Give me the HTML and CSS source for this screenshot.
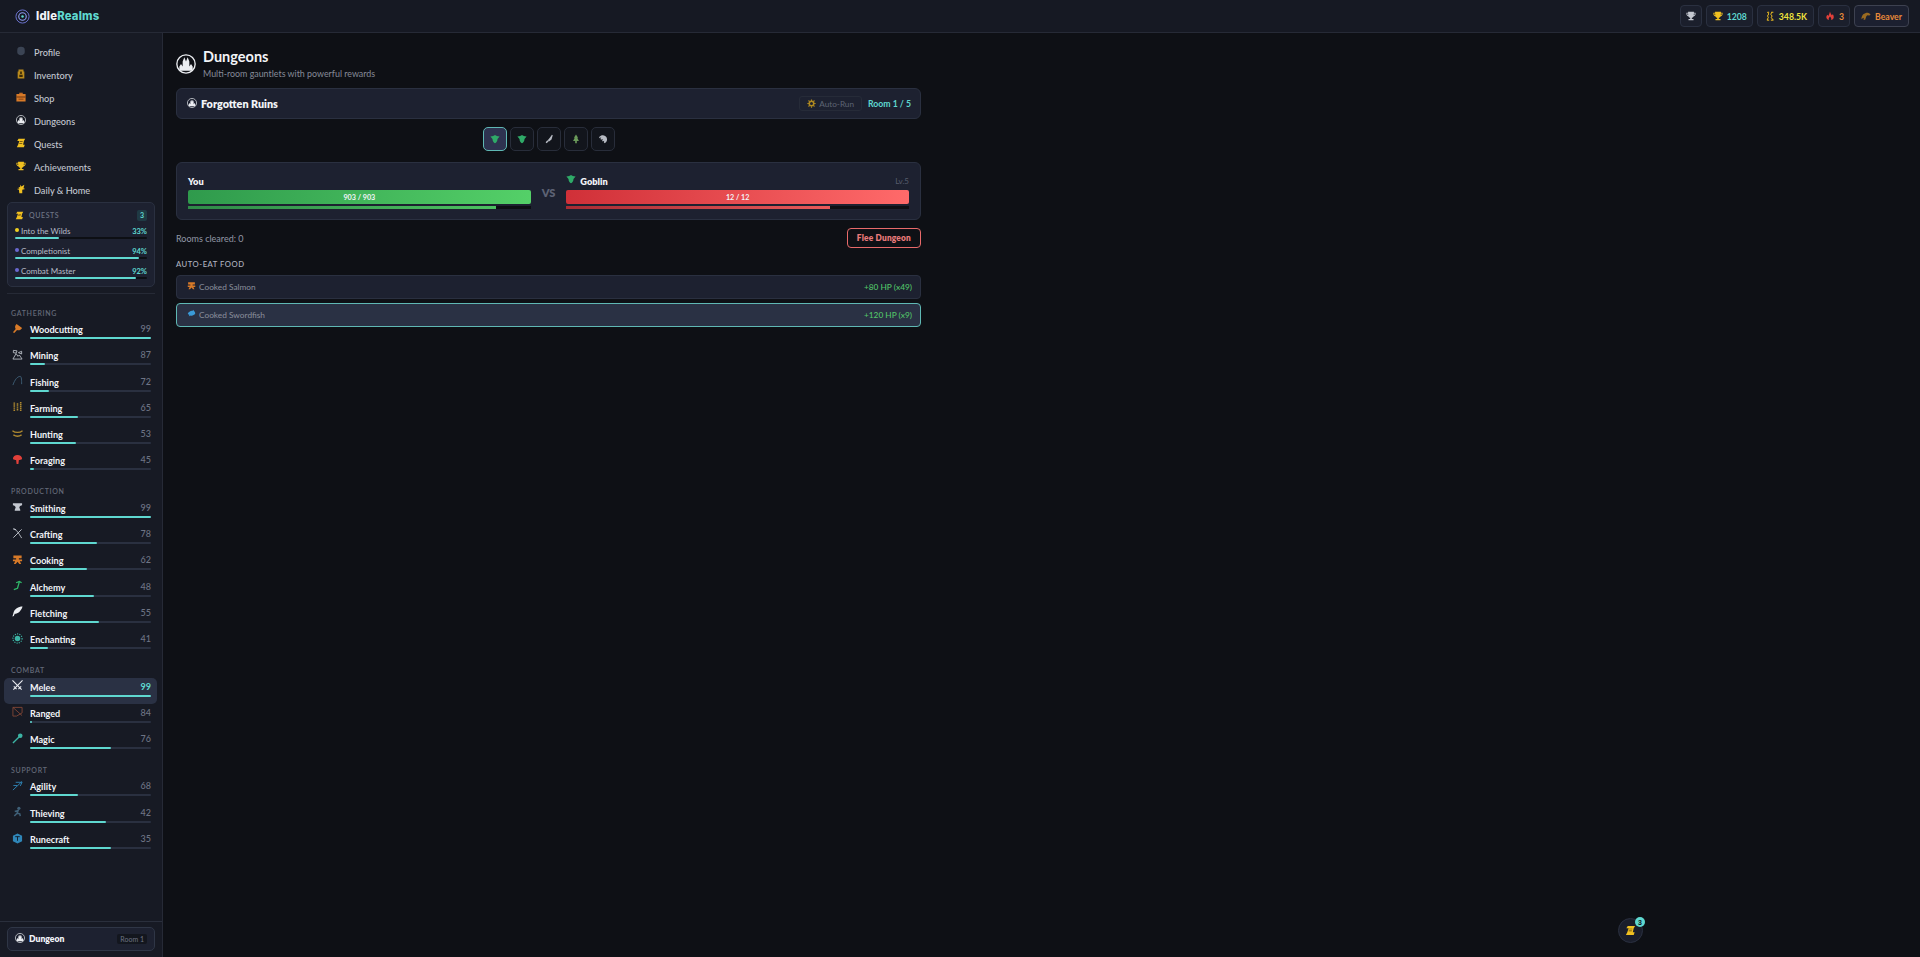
FILE: index.html
```html
<!DOCTYPE html>
<html lang="en">
<head>
<meta charset="utf-8">
<title>IdleRealms - Dungeons</title>
<link rel="stylesheet" href="styles.css">
</head>
<body>
<svg class="defs" width="0" height="0" aria-hidden="true">
  <symbol id="i-castle" viewBox="0 0 24 24"><circle cx="12" cy="12" r="11" fill="none" stroke="currentColor" stroke-width="1.6"/><path fill="currentColor" d="M4 20v-5l2-3 2 3V9l2-5 2 5 2-5 2 5v6l2-3 2 3v5z"/></symbol>
  <symbol id="i-goblin" viewBox="0 0 24 24"><path fill="currentColor" d="M1 6l7-1c1-3 7-3 8 0l7 1-5 6c0 5-3 10-6 10s-6-5-6-10z"/></symbol>
  <symbol id="i-scroll" viewBox="0 0 24 24"><path fill="currentColor" d="M6 2h16l-3 5-2 9h4l-2 6H2l3-6 3-9H3z"/><path fill="#5a3d0c" d="M9 8h7v1.500H9zM8 12h7v1.500H8z"/></symbol>
  <symbol id="i-trophy" viewBox="0 0 24 24"><path fill="currentColor" d="M5 2h14v2h4v3c0 3-2 5-5 6-1 2-3 3-4 3v3h4v3H6v-3h4v-3c-1 0-3-1-4-3-3-1-5-3-5-6V4h4zM3 6v1c0 1 1 3 2.500 3L5 6zm18 0h-2l-.5 4C20 10 21 8 21 7z"/></symbol>
  <symbol id="i-chest" viewBox="0 0 24 24"><path fill="currentColor" d="M6 1h12v5h2v17H4V6h2z"/><path fill="#3a2a08" d="M10 6h4v6h-4zM8 14h8v5H8z"/></symbol>
  <symbol id="i-shop" viewBox="0 0 24 24"><path fill="currentColor" d="M8 2h8v3h7v18H1V5h7z"/><path fill="#6b3410" d="M1 11h22v2H1zM6 16h12v2H6zM10 4h4v1h-4z"/></symbol>
  <symbol id="i-head" viewBox="0 0 24 24"><path fill="currentColor" d="M3 10a9 8 0 0 1 18 0v5c0 4-4 7-9 7s-9-3-9-7z"/></symbol>
  <symbol id="i-gift" viewBox="0 0 24 24"><path fill="currentColor" d="M10 2l3 4 7-4-2 8 4 2-7 2v8H8l-1-8-5-2 6-1-2-4 4 1z"/></symbol>
  <symbol id="i-axe" viewBox="0 0 24 24"><path fill="currentColor" d="M10 2l12 9c-3 5-8 6-11 4L5 22l-3-2 6-7C6 10 6 5 10 2z"/></symbol>
  <symbol id="i-mine" viewBox="0 0 24 24"><path fill="none" stroke="currentColor" stroke-width="1.800" d="M2 22l7-12 4 6 3-3 6 9zM3 3l8 1-2 5-6-1zM14 8l7-3v6z"/></symbol>
  <symbol id="i-rod" viewBox="0 0 24 24"><path fill="none" stroke="currentColor" stroke-width="2" d="M2 22C6 10 12 3 18 3c3 0 3 10 3 17"/></symbol>
  <symbol id="i-wheat" viewBox="0 0 24 24"><path fill="none" stroke="currentColor" stroke-width="3.500" stroke-dasharray="3 1.200" d="M5 3v19M12 5v17M19 2v20"/></symbol>
  <symbol id="i-bow" viewBox="0 0 24 24"><path fill="none" stroke="currentColor" stroke-width="2.800" d="M1 6c6 5 16 5 22 0M3 15c6 4 12 4 18 0"/></symbol>
  <symbol id="i-shroom" viewBox="0 0 24 24"><path fill="currentColor" d="M2 11a10 9 0 0 1 20 0c-2 2-5 2-7 2l-1 9h-4l-1-9c-2 0-5 0-7-2z"/></symbol>
  <symbol id="i-anvil" viewBox="0 0 24 24"><path fill="currentColor" d="M2 5h20v4c-3 1-6 2-6 5l2 5v2H6v-2l2-5c0-3-3-4-6-5z"/></symbol>
  <symbol id="i-cross" viewBox="0 0 24 24"><path fill="none" stroke="currentColor" stroke-width="2" d="M3 2c6 0 12 10 18 20M21 3L3 21M3 2l6 2"/></symbol>
  <symbol id="i-pot" viewBox="0 0 24 24"><path fill="currentColor" d="M3 3h18v6h-6v3h7v4h-5l3 6h-4l-4-5-4 5H4l3-6H2v-4h7V9H3z"/></symbol>
  <symbol id="i-flask" viewBox="0 0 24 24"><path fill="none" stroke="currentColor" stroke-width="2.800" d="M4 21l8-3 4-14M9 6l7-3 5 3"/></symbol>
  <symbol id="i-feather" viewBox="0 0 24 24"><path fill="currentColor" d="M23 1C14 1 5 6 3 16l-2 7 3-1 2-5c7 0 14-6 17-16z"/></symbol>
  <symbol id="i-gem" viewBox="0 0 24 24"><circle cx="12" cy="12" r="6" fill="currentColor"/><circle cx="12" cy="12" r="10" fill="none" stroke="currentColor" stroke-width="2.500" stroke-dasharray="2.500 2.500"/></symbol>
  <symbol id="i-swords" viewBox="0 0 24 24"><path fill="none" stroke="currentColor" stroke-width="2.400" d="M1 1l20 20M23 1L3 21M4 14l6 6M20 14l-6 6"/></symbol>
  <symbol id="i-target" viewBox="0 0 24 24"><path fill="none" stroke="currentColor" stroke-width="1.800" d="M2 3h20v12L10 22H2zM2 3l20 18"/></symbol>
  <symbol id="i-wand" viewBox="0 0 24 24"><path fill="none" stroke="currentColor" stroke-width="3" d="M2 22L17 7"/><circle cx="18" cy="6" r="5" fill="currentColor"/></symbol>
  <symbol id="i-run" viewBox="0 0 24 24"><path fill="none" stroke="currentColor" stroke-width="2" d="M2 22L22 3M8 5h14l-4 8M3 12h8"/></symbol>
  <symbol id="i-thief" viewBox="0 0 24 24"><circle cx="15" cy="5" r="3.500" fill="currentColor"/><path fill="none" stroke="currentColor" stroke-width="3.200" d="M14 8l-3 8-6 6M11 16l6 1 1 5M12 10l-6 2"/></symbol>
  <symbol id="i-rune" viewBox="0 0 24 24"><path fill="currentColor" d="M12 1l10 5v12l-10 5-10-5V6z"/><path fill="none" stroke="#0e1a28" stroke-width="2" d="M7 8h10M12 8v9"/></symbol>
  <symbol id="i-dagger" viewBox="0 0 24 24"><path fill="currentColor" d="M19 2l2 1-3 10-6 5-3-3 5-6zM8 15l3 3-5 4-2-2z"/></symbol>
  <symbol id="i-tree" viewBox="0 0 24 24"><path fill="currentColor" d="M12 1l5 8h-2l4 8h-5v5h-4v-5H5l4-8H7z"/></symbol>
  <symbol id="i-claw" viewBox="0 0 24 24"><path fill="currentColor" d="M3 7c5-6 15-5 18 2 2 6 0 11-5 13l-2-2 1-4-4 2-1-3 2-3-5 2-1-3 2-3-5 2z"/></symbol>
  <symbol id="i-gear" viewBox="0 0 24 24"><circle cx="12" cy="12" r="6" fill="none" stroke="currentColor" stroke-width="4"/><path fill="none" stroke="currentColor" stroke-width="3" d="M12 1v4M12 19v4M1 12h4M19 12h4M4 4l3 3M17 17l3 3M20 4l-3 3M4 20l3-3"/></symbol>
  <symbol id="i-fishc" viewBox="0 0 24 24"><path fill="currentColor" d="M2 13c2-5 8-9 13-8l1-3 3 3c2 2 3 4 3 7-3 5-9 7-14 5l-3 3 1-5z"/></symbol>
  <symbol id="i-coins" viewBox="0 0 24 24"><path fill="none" stroke="currentColor" stroke-width="2.400" d="M6 3l3 4-3 5 2 3-3 7M16 3l-2 5 3 4-2 4 5 6M6 3h4M15 3h5M5 22h5M14 22h6"/></symbol>
  <symbol id="i-flame" viewBox="0 0 24 24"><path fill="currentColor" d="M12 1c1 5 3 6 4 9l3-2c3 5 3 11-2 13h-3c2-2 1-5-2-8-3 3-4 6-2 8H7C2 18 2 12 6 9l2 3c2-4 3-7 4-11z"/></symbol>
  <symbol id="i-beaver" viewBox="0 0 24 24"><path fill="currentColor" d="M1 20C1 9 8 4 16 4c3 0 5 2 7 5-2 2-4 2-6 1-2 0-4 1-5 5l-2 6H6l1-5c-2 0-4 2-6 4z"/></symbol>
</svg>

<div class="app">
  <header class="topbar">
    <div class="brand">
      <svg class="brand-logo" viewBox="0 0 24 24"><circle cx="12" cy="12" r="10.500" fill="none" stroke="#6f78d8" stroke-width="1.500"/><circle cx="12" cy="12" r="6" fill="none" stroke="#8f9cf0" stroke-width="1.800"/><circle cx="12" cy="12" r="2" fill="#5fd8d0"/></svg>
      <span class="brand-name">Idle<span class="brand-accent">Realms</span></span>
    </div>
    <div class="stats">
      <div class="chip chip-icon"><svg class="ic ic-silver"><use href="#i-trophy"/></svg></div>
      <div class="chip"><svg class="ic ic-gold"><use href="#i-trophy"/></svg><span class="teal">1208</span></div>
      <div class="chip chip-coin"><svg class="ic ic-gold"><use href="#i-coins"/></svg><span class="yellow">348.5K</span></div>
      <div class="chip"><svg class="ic ic-red"><use href="#i-flame"/></svg><span class="orange">3</span></div>
      <div class="chip chip-pet"><svg class="ic ic-bronze"><use href="#i-beaver"/></svg><span class="orange">Beaver</span></div>
    </div>
  </header>

  <div class="body">
    <aside class="sidebar">
      <nav class="nav">
        <a class="nav-item"><svg class="nav-ic ic-slate"><use href="#i-head"/></svg>Profile</a>
        <a class="nav-item"><svg class="nav-ic ic-amber"><use href="#i-chest"/></svg>Inventory</a>
        <a class="nav-item"><svg class="nav-ic ic-orange"><use href="#i-shop"/></svg>Shop</a>
        <a class="nav-item"><svg class="nav-ic ic-white"><use href="#i-castle"/></svg>Dungeons</a>
        <a class="nav-item"><svg class="nav-ic ic-gold"><use href="#i-scroll"/></svg>Quests</a>
        <a class="nav-item"><svg class="nav-ic ic-gold"><use href="#i-trophy"/></svg>Achievements</a>
        <a class="nav-item"><svg class="nav-ic ic-gold"><use href="#i-gift"/></svg>Daily &amp; Home</a>
      </nav>

      <section class="quests">
        <div class="quests-head">
          <svg class="q-ic ic-gold"><use href="#i-scroll"/></svg>
          <span class="quests-title">QUESTS</span>
          <span class="quests-count">3</span>
        </div>
        <div class="quest">
          <div class="quest-line"><i class="dot dot-y"></i><span class="quest-name">Into the Wilds</span><span class="quest-pct">33%</span></div>
          <div class="quest-track"><div class="quest-fill" style="width:33%"></div></div>
        </div>
        <div class="quest">
          <div class="quest-line"><i class="dot dot-p"></i><span class="quest-name">Completionist</span><span class="quest-pct">94%</span></div>
          <div class="quest-track"><div class="quest-fill" style="width:94%"></div></div>
        </div>
        <div class="quest">
          <div class="quest-line"><i class="dot dot-p"></i><span class="quest-name">Combat Master</span><span class="quest-pct">92%</span></div>
          <div class="quest-track"><div class="quest-fill" style="width:92%"></div></div>
        </div>
      </section>
      <hr class="rule">

      <div class="group-label">GATHERING</div>
      <a class="skill"><svg class="sk-ic ic-orange"><use href="#i-axe"/></svg><div class="sk-body"><div class="sk-line"><span class="sk-name">Woodcutting</span><span class="sk-lvl">99</span></div><div class="sk-track"><div class="sk-fill" style="width:100%"></div></div></div></a>
      <a class="skill"><svg class="sk-ic ic-silver"><use href="#i-mine"/></svg><div class="sk-body"><div class="sk-line"><span class="sk-name">Mining</span><span class="sk-lvl">87</span></div><div class="sk-track"><div class="sk-fill" style="width:12%"></div></div></div></a>
      <a class="skill"><svg class="sk-ic ic-steel"><use href="#i-rod"/></svg><div class="sk-body"><div class="sk-line"><span class="sk-name">Fishing</span><span class="sk-lvl">72</span></div><div class="sk-track"><div class="sk-fill" style="width:16%"></div></div></div></a>
      <a class="skill"><svg class="sk-ic ic-wheat"><use href="#i-wheat"/></svg><div class="sk-body"><div class="sk-line"><span class="sk-name">Farming</span><span class="sk-lvl">65</span></div><div class="sk-track"><div class="sk-fill" style="width:40%"></div></div></div></a>
      <a class="skill"><svg class="sk-ic ic-wheat"><use href="#i-bow"/></svg><div class="sk-body"><div class="sk-line"><span class="sk-name">Hunting</span><span class="sk-lvl">53</span></div><div class="sk-track"><div class="sk-fill" style="width:38%"></div></div></div></a>
      <a class="skill"><svg class="sk-ic ic-red"><use href="#i-shroom"/></svg><div class="sk-body"><div class="sk-line"><span class="sk-name">Foraging</span><span class="sk-lvl">45</span></div><div class="sk-track"><div class="sk-fill" style="width:3.500%"></div></div></div></a>

      <div class="group-label">PRODUCTION</div>
      <a class="skill"><svg class="sk-ic ic-silver"><use href="#i-anvil"/></svg><div class="sk-body"><div class="sk-line"><span class="sk-name">Smithing</span><span class="sk-lvl">99</span></div><div class="sk-track"><div class="sk-fill" style="width:100%"></div></div></div></a>
      <a class="skill"><svg class="sk-ic ic-silver"><use href="#i-cross"/></svg><div class="sk-body"><div class="sk-line"><span class="sk-name">Crafting</span><span class="sk-lvl">78</span></div><div class="sk-track"><div class="sk-fill" style="width:55%"></div></div></div></a>
      <a class="skill"><svg class="sk-ic ic-orange"><use href="#i-pot"/></svg><div class="sk-body"><div class="sk-line"><span class="sk-name">Cooking</span><span class="sk-lvl">62</span></div><div class="sk-track"><div class="sk-fill" style="width:47.500%"></div></div></div></a>
      <a class="skill"><svg class="sk-ic ic-green"><use href="#i-flask"/></svg><div class="sk-body"><div class="sk-line"><span class="sk-name">Alchemy</span><span class="sk-lvl">48</span></div><div class="sk-track"><div class="sk-fill" style="width:53%"></div></div></div></a>
      <a class="skill"><svg class="sk-ic ic-white"><use href="#i-feather"/></svg><div class="sk-body"><div class="sk-line"><span class="sk-name">Fletching</span><span class="sk-lvl">55</span></div><div class="sk-track"><div class="sk-fill" style="width:57%"></div></div></div></a>
      <a class="skill"><svg class="sk-ic ic-aqua"><use href="#i-gem"/></svg><div class="sk-body"><div class="sk-line"><span class="sk-name">Enchanting</span><span class="sk-lvl">41</span></div><div class="sk-track"><div class="sk-fill" style="width:15%"></div></div></div></a>

      <div class="group-label">COMBAT</div>
      <a class="skill skill-active"><svg class="sk-ic ic-white"><use href="#i-swords"/></svg><div class="sk-body"><div class="sk-line"><span class="sk-name">Melee</span><span class="sk-lvl">99</span></div><div class="sk-track"><div class="sk-fill" style="width:100%"></div></div></div></a>
      <a class="skill"><svg class="sk-ic ic-rust"><use href="#i-target"/></svg><div class="sk-body"><div class="sk-line"><span class="sk-name">Ranged</span><span class="sk-lvl">84</span></div><div class="sk-track"><div class="sk-fill" style="width:1.500%"></div></div></div></a>
      <a class="skill"><svg class="sk-ic ic-aqua"><use href="#i-wand"/></svg><div class="sk-body"><div class="sk-line"><span class="sk-name">Magic</span><span class="sk-lvl">76</span></div><div class="sk-track"><div class="sk-fill" style="width:67%"></div></div></div></a>

      <div class="group-label">SUPPORT</div>
      <a class="skill"><svg class="sk-ic ic-blue"><use href="#i-run"/></svg><div class="sk-body"><div class="sk-line"><span class="sk-name">Agility</span><span class="sk-lvl">68</span></div><div class="sk-track"><div class="sk-fill" style="width:40%"></div></div></div></a>
      <a class="skill"><svg class="sk-ic ic-steel"><use href="#i-thief"/></svg><div class="sk-body"><div class="sk-line"><span class="sk-name">Thieving</span><span class="sk-lvl">42</span></div><div class="sk-track"><div class="sk-fill" style="width:63%"></div></div></div></a>
      <a class="skill"><svg class="sk-ic ic-blue"><use href="#i-rune"/></svg><div class="sk-body"><div class="sk-line"><span class="sk-name">Runecraft</span><span class="sk-lvl">35</span></div><div class="sk-track"><div class="sk-fill" style="width:67%"></div></div></div></a>

      <div class="side-foot">
        <div class="activity">
          <svg class="nav-ic ic-white"><use href="#i-castle"/></svg>
          <span class="activity-name">Dungeon</span>
          <span class="activity-tag">Room 1</span>
        </div>
      </div>
    </aside>

    <main class="main">
      <div class="column">
        <div class="page-head">
          <svg class="page-ic"><use href="#i-castle"/></svg>
          <div>
            <h1 class="page-title">Dungeons</h1>
            <p class="page-sub">Multi-room gauntlets with powerful rewards</p>
          </div>
        </div>

        <div class="card dungeon-head">
          <svg class="dh-ic"><use href="#i-castle"/></svg>
          <span class="dh-name">Forgotten Ruins</span>
          <span class="auto-run"><svg class="ar-ic"><use href="#i-gear"/></svg>Auto-Run</span>
          <span class="room-no">Room 1 / 5</span>
        </div>

        <div class="rooms">
          <button class="room room-on"><svg class="room-ic ic-green2"><use href="#i-goblin"/></svg></button>
          <button class="room"><svg class="room-ic ic-green2"><use href="#i-goblin"/></svg></button>
          <button class="room"><svg class="room-ic ic-gray"><use href="#i-dagger"/></svg></button>
          <button class="room"><svg class="room-ic ic-moss"><use href="#i-tree"/></svg></button>
          <button class="room"><svg class="room-ic ic-gray"><use href="#i-claw"/></svg></button>
        </div>

        <div class="card battle">
          <div class="fighter">
            <div class="f-line"><span class="f-name">You</span></div>
            <div class="hp hp-green">903 / 903</div>
            <div class="atk"><div class="atk-fill atk-green" style="width:90%"></div></div>
          </div>
          <div class="vs">VS</div>
          <div class="fighter">
            <div class="f-line"><svg class="f-ic ic-green2"><use href="#i-goblin"/></svg><span class="f-name">Goblin</span><span class="f-lvl">Lv.5</span></div>
            <div class="hp hp-red">12 / 12</div>
            <div class="atk"><div class="atk-fill atk-red" style="width:77%"></div></div>
          </div>
        </div>

        <div class="progress-row">
          <span class="cleared">Rooms cleared: 0</span>
          <button class="flee">Flee Dungeon</button>
        </div>

        <div class="food-title">AUTO-EAT FOOD</div>
        <div class="food"><svg class="food-ic ic-orange"><use href="#i-pot"/></svg><span class="food-name">Cooked Salmon</span><span class="food-hp">+80 HP (x49)</span></div>
        <div class="food food-on"><svg class="food-ic ic-blue2"><use href="#i-fishc"/></svg><span class="food-name">Cooked Swordfish</span><span class="food-hp">+120 HP (x9)</span></div>
      </div>
    </main>
  </div>

  <button class="fab"><svg class="fab-ic ic-gold"><use href="#i-scroll"/></svg><span class="fab-badge">3</span></button>
</div>
</body>
</html>
```

FILE: styles.css
```css
* { box-sizing: border-box; }
html, body { margin: 0; height: 100%; }
body { background: #0e1015; color: #e6e8ee; font-family: Lato, Inter, sans-serif; overflow: hidden; }
.defs { position: absolute; }
svg { display: block; flex: none; }
.app { height: 957px; display: flex; flex-direction: column; }

.topbar { height: 33px; flex: none; display: flex; align-items: center; justify-content: space-between; padding: 0 11px 0 15px; background: #161923; border-bottom: 1px solid #262a36; }
.brand { display: flex; align-items: center; gap: 6px; }
.brand-logo { width: 15px; height: 15px; }
.brand-name { font-family: Inter, sans-serif; font-size: 11.300px; font-weight: 800; color: #f2f4f8; letter-spacing: .2px; }
.brand-accent { color: #5fd8d0; }
.stats { display: flex; gap: 4px; }
.chip { height: 22px; display: flex; align-items: center; gap: 4px; padding: 0 5px 0 6px; background: #1b1f2c; border: 1px solid #2a3040; border-radius: 4px; font-size: 8.700px; font-weight: 700; }
.chip-icon { padding: 0 5px; }
.chip-coin { padding: 0 6px 0 7px; }
.chip-pet { padding: 0 6px; border-color: #3d4150; background: #1c2030; }
.ic { width: 10px; height: 10px; }
.teal { color: #5fd8d0; }
.yellow { color: #f0e23c; }
.orange { color: #e88a3a; }
.ic-silver { color: #c4c8d0; }
.ic-gold { color: #f0c020; }
.ic-red { color: #e2403a; }
.ic-bronze { color: #9a6a20; }
.ic-slate { color: #3b4454; }
.ic-amber { color: #b98a1c; }
.ic-orange { color: #d87a28; }
.ic-white { color: #eceef2; }
.ic-steel { color: #3f6078; }
.ic-wheat { color: #b08a30; }
.ic-green { color: #2fb868; }
.ic-aqua { color: #3cb4a4; }
.ic-rust { color: #8a4a38; }
.ic-blue { color: #2f86b8; }
.ic-blue2 { color: #3a9ad8; }
.ic-green2 { color: #2faa68; }
.ic-gray { color: #b8bcc4; }
.ic-moss { color: #6a9a5a; }

.body { flex: 1; min-height: 0; display: flex; }
.sidebar { width: 163px; flex: none; display: flex; flex-direction: column; padding-top: 7.500px; background: #171a24; border-right: 1px solid #262a36; }
.nav { display: flex; flex-direction: column; margin-bottom: .5px; }
.nav-item { height: 23px; display: flex; align-items: center; gap: 8px; padding: 0 0 0 16px; font-size: 9.200px; font-weight: 500; color: #c3c7d0; }
.nav-ic { width: 10px; height: 10px; margin-top: -2px; }

.quests { margin: 0 7px; height: 85px; padding: 6px 7px 0 7px; background: #1d2130; border: 1px solid #2a3040; border-radius: 5px; }
.quests-head { display: flex; align-items: center; gap: 5px; height: 12px; margin-bottom: -2px; }
.q-ic { width: 9px; height: 9px; }
.quests-title { flex: 1; font-size: 7px; font-weight: 600; letter-spacing: .6px; color: #6e7484; }
.quests-count { width: 10px; height: 11px; display: flex; align-items: center; justify-content: center; background: #1f3a44; border-radius: 2px; font-size: 7px; font-weight: 700; color: #5fd8d0; }
.quest { height: 20px; display: flex; flex-direction: column; justify-content: flex-end; }
.quest-line { display: flex; align-items: center; gap: 2px; font-size: 8px; margin-bottom: 1px; }
.dot { width: 4px; height: 4px; border-radius: 50%; margin-bottom: 3px; }
.dot-y { background: #f0d020; }
.dot-p { background: #6a68d0; }
.quest-name { flex: 1; color: #b8bcc8; }
.quest-pct { font-size: 7.500px; font-weight: 700; color: #5fd8d0; }
.quest-track { height: 2px; background: #0d0f14; border-radius: 1px; }
.quest-fill { height: 100%; background: #5fd8d0; border-radius: 1px; }
.rule { width: 148px; margin: 6px 7px 5px; border: 0; border-top: 1px solid #262a36; }

.group-label { height: 15px; margin-top: 6px; padding-left: 11px; display: flex; align-items: center; font-size: 7px; font-weight: 600; letter-spacing: .7px; color: #636978; }
.skill { height: 26.300px; margin: 0 5px 0 4px; padding: 0 6px 0 8px; display: flex; align-items: flex-start; gap: 7px; border-radius: 5px; }
.skill-active { background: #2a3144; }
.sk-ic { width: 11px; height: 11px; margin-top: 2.500px; }
.sk-body { flex: 1; min-width: 0; padding-top: 4px; }
.sk-line { display: flex; justify-content: space-between; align-items: baseline; height: 13px; }
.sk-name { font-size: 9.100px; font-weight: 700; color: #f2f4f8; }
.sk-lvl { font-size: 9px; font-weight: 500; color: #6e7484; position: relative; top: -1px; }
.skill-active .sk-lvl { color: #5fd8d0; font-weight: 700; }
.sk-track { height: 2px; background: #2a3040; border-radius: 1px; }
.sk-fill { height: 100%; background: #5fd8d0; border-radius: 1px; }

.side-foot { margin-top: auto; height: 36px; padding: 5px 7px 0; border-top: 1px solid #2a2f3c; }
.activity { height: 24px; display: flex; align-items: center; padding: 0 7px; gap: 4px; background: #1d2130; border: 1px solid #2f3646; border-radius: 5px; }
.activity-name { flex: 1; font-size: 8.600px; font-weight: 800; color: #f2f4f8; }
.activity-tag { padding: 1px 3px; background: #13161e; border-radius: 2px; font-size: 7px; color: #6e7484; }

.main { flex: 1; min-width: 0; padding: 12px 0 0 13px; }
.column { width: 745px; }
.page-head { display: flex; align-items: center; gap: 7px; height: 37px; margin-bottom: 6px; }
.page-ic { width: 20px; height: 20px; color: #eceef2; }
.page-title { margin: 0; font-size: 14.500px; font-weight: 700; line-height: 18px; color: #f2f4f8; }
.page-sub { margin: 2px 0 0; font-size: 8.900px; color: #868b98; }

.card { background: #1d2130; border: 1px solid #2a3040; border-radius: 6px; }
.dungeon-head { height: 31px; display: flex; align-items: center; padding: 0 9px 0 10px; }
.dh-ic { width: 10px; height: 10px; color: #eceef2; margin-right: 4px; margin-top: -2px; }
.dh-name { flex: 1; font-size: 10.800px; font-weight: 800; color: #f2f4f8; }
.auto-run { height: 15px; display: flex; align-items: center; gap: 3px; padding: 0 7px; margin-right: 6px; border: 1px solid #262b38; border-radius: 3px; font-size: 8.200px; color: #5e6474; }
.ar-ic { width: 9px; height: 9px; color: #b08a20; }
.room-no { font-size: 8.700px; font-weight: 700; color: #5fd8d0; }

.rooms { display: flex; justify-content: center; gap: 3px; margin-top: 8px; }
.room { width: 24px; height: 24px; padding: 0; display: flex; align-items: center; justify-content: center; background: #12151c; border: 1px solid #282d3a; border-radius: 5px; }
.room-on { background: #2e3350; border-color: #5fb8b4; }
.room-ic { width: 10px; height: 10px; }

.battle { height: 58px; margin-top: 11px; padding: 0 11px 0 11px; display: flex; align-items: flex-end; gap: 11px; }
.fighter { flex: 1; min-width: 0; padding-bottom: 10px; }
.f-line { display: flex; align-items: center; gap: 4px; height: 14px; margin-bottom: 2px; }
.f-ic { width: 10px; height: 10px; margin-top: -5px; }
.f-name { flex: 1; font-size: 9.200px; font-weight: 800; color: #f2f4f8; }
.f-lvl { font-size: 8px; color: #565c6c; }
.hp { height: 14px; display: flex; align-items: center; justify-content: center; border-radius: 2px; font-size: 7.200px; font-weight: 700; color: #f2f4f8; }
.hp-green { background: linear-gradient(90deg, #2f9a4c, #54d068); }
.hp-red { background: linear-gradient(90deg, #d03038, #ff6a6a); }
.atk { height: 3px; margin-top: 2px; background: #0d0f14; }
.atk-fill { height: 100%; }
.atk-green { background: linear-gradient(90deg, #2f8a48, #4cc060); }
.atk-red { background: linear-gradient(90deg, #a82c34, #e85a5a); }
.vs { align-self: center; font-size: 11px; font-weight: 800; color: #5c6274; margin-top: 2px; }

.progress-row { height: 20px; margin-top: 8px; display: flex; align-items: center; justify-content: space-between; }
.cleared { font-size: 9px; color: #9298a6; padding-top: 1px; }
.flee { height: 20px; padding: 0 9px; background: transparent; border: 1px solid #e86a6a; border-radius: 4px; font: 800 8.300px Lato, sans-serif; letter-spacing: .2px; color: #e87a7a; }

.food-title { height: 14px; margin-top: 9px; display: flex; align-items: center; font-size: 7.700px; font-weight: 500; letter-spacing: .5px; color: #b0b4c0; }
.food { height: 24px; margin-top: 4px; display: flex; align-items: center; padding: 0 8px 0 10px; background: #1d2130; border: 1px solid #2a3040; border-radius: 4px; }
.food-on { background: #2a3144; border-color: #5fb8b4; }
.food-ic { width: 9px; height: 9px; margin-right: 3px; margin-top: -3px; }
.food-name { flex: 1; font-size: 8.300px; color: #8a8f9c; }
.food-hp { font-size: 8.300px; font-weight: 500; color: #52c468; }

.fab { position: absolute; left: 1618px; top: 918px; width: 25px; height: 25px; padding: 0; display: flex; align-items: center; justify-content: center; background: #1a1e2b; border: 1px solid #2a3040; border-radius: 50%; }
.fab-ic { width: 11px; height: 11px; }
.fab-badge { position: absolute; top: -2px; right: -3px; width: 10px; height: 10px; display: flex; align-items: center; justify-content: center; background: #5fd8d0; border-radius: 50%; font-size: 7px; font-weight: 800; color: #0e1016; }
```
